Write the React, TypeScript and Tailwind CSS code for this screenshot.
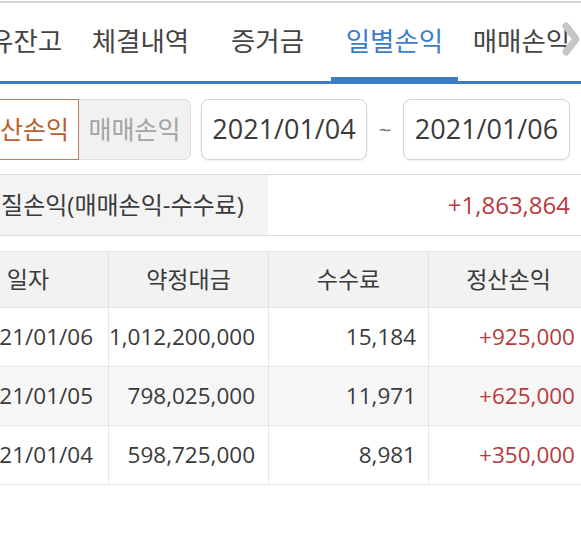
import React from "react";

const tabs = ["보유잔고", "체결내역", "증거금", "일별손익", "매매손익"];

const rows = [
  { date: "2021/01/06", amount: "1,012,200,000", fee: "15,184", pnl: "+925,000" },
  { date: "2021/01/05", amount: "798,025,000", fee: "11,971", pnl: "+625,000" },
  { date: "2021/01/04", amount: "598,725,000", fee: "8,981", pnl: "+350,000" },
];

const font = { fontFamily: '"Open Sans", "Noto Sans CJK KR", sans-serif' };

export default function App() {
  return (
    <div className="relative w-[581px] h-[554px] overflow-hidden bg-white text-[#3a3a3a]" style={font}>
      {/* top hairline */}
      <div className="mt-[1px] h-[2px] bg-[#d2d2d2]" />

      {/* tab bar, scrolled sideways */}
      <div className="relative overflow-hidden border-b-[3px] border-[#3d7cc9]">
        <div className="flex ml-[-50px]">
          {tabs.map((t) => {
            const active = t === "일별손익";
            return (
              <div
                key={t}
                className={
                  active
                    ? "w-[127px] shrink-0 h-[78px] flex items-center justify-center text-[26.5px] text-[#3d7cc9] border-b-4 border-[#3d7cc9]"
                    : "w-[127px] shrink-0 h-[78px] flex items-center justify-center text-[26.5px] text-[#444] border-b-4 border-transparent"
                }
              >
                <span className="pt-[4px] whitespace-nowrap">{t}</span>
              </div>
            );
          })}
        </div>
        {/* scroll chevron */}
        <svg className="absolute right-[0px] top-[18px]" width="20" height="36" viewBox="0 0 20 36">
          <path d="M5 5 L15 18 L5 31" fill="none" stroke="#c6c6c6" strokeWidth="7" strokeLinecap="round" strokeLinejoin="round" />
        </svg>
      </div>

      {/* filter row */}
      <div className="mt-[15px] flex items-stretch h-[61px]">
        <div className="flex ml-[-33px]">
          <div className="w-[112px] flex items-center justify-center border border-[#c27c55] bg-white text-[25px] text-[#b95f2c] whitespace-nowrap">
            정산손익
          </div>
          <div className="w-[112px] flex items-center justify-center border border-l-0 border-[#dedede] bg-[#f1f1f1] rounded-r-[7px] text-[25px] text-[#a3a3a3] whitespace-nowrap">
            매매손익
          </div>
        </div>
        <div className="ml-[10px] w-[166px] flex items-center justify-center rounded-[8px] border border-[#d3d3d3] shadow-[0_1px_2px_rgba(0,0,0,0.08)] text-[27px] text-[#3a3a3a]">
          2021/01/04
        </div>
        <div className="w-[36px] flex items-center justify-center text-[22px] text-[#777]">~</div>
        <div className="w-[167px] flex items-center justify-center rounded-[8px] border border-[#d3d3d3] shadow-[0_1px_2px_rgba(0,0,0,0.08)] text-[27px] text-[#3a3a3a]">
          2021/01/06
        </div>
      </div>

      {/* summary */}
      <div className="mt-[14px] flex h-[62px] border-y border-[#dcdcdc]">
        <div className="ml-[-52px] w-[320px] shrink-0 bg-[#f3f3f3] flex items-center pl-[31px] text-[24px] text-[#3a3a3a] whitespace-nowrap">
          실질손익(매매손익-수수료)
        </div>
        <div className="flex-1 flex items-center justify-end pr-[11px] text-[24px] text-[#b83a3c]">+1,863,864</div>
      </div>

      {/* table */}
      <div className="mt-[15px] ml-[-52px] w-[640px]">
        <div className="grid grid-cols-4 h-[57px] bg-[#f2f2f2] border-t border-[#e6e6e6] border-b border-[#dcdcdc] text-[23px] text-[#3a3a3a]">
          {["일자", "약정대금", "수수료", "정산손익"].map((h, i) => (
            <div
              key={h}
              className={i > 0 ? "flex items-center justify-center border-l border-[#e0e0e0]" : "flex items-center justify-center"}
            >
              {h}
            </div>
          ))}
        </div>
        {rows.map((r, idx) => (
          <div
            key={r.date}
            className={
              idx === 1
                ? "grid grid-cols-4 h-[59px] bg-[#f7f7f7] border-b border-[#e6e6e6] text-[22.5px]"
                : "grid grid-cols-4 h-[59px] bg-white border-b border-[#e6e6e6] text-[22.5px]"
            }
          >
            <div className="flex items-center justify-end pr-[15px] text-[#3a3a3a]">{r.date}</div>
            <div className="flex items-center justify-end pr-[13px] border-l border-[#e6e6e6] text-[#3a3a3a]">{r.amount}</div>
            <div className="flex items-center justify-end pr-[12px] border-l border-[#e6e6e6] text-[#3a3a3a]">{r.fee}</div>
            <div className="flex items-center justify-end pr-[13px] border-l border-[#e6e6e6] text-[#b83a3c]">{r.pnl}</div>
          </div>
        ))}
      </div>
    </div>
  );
}
